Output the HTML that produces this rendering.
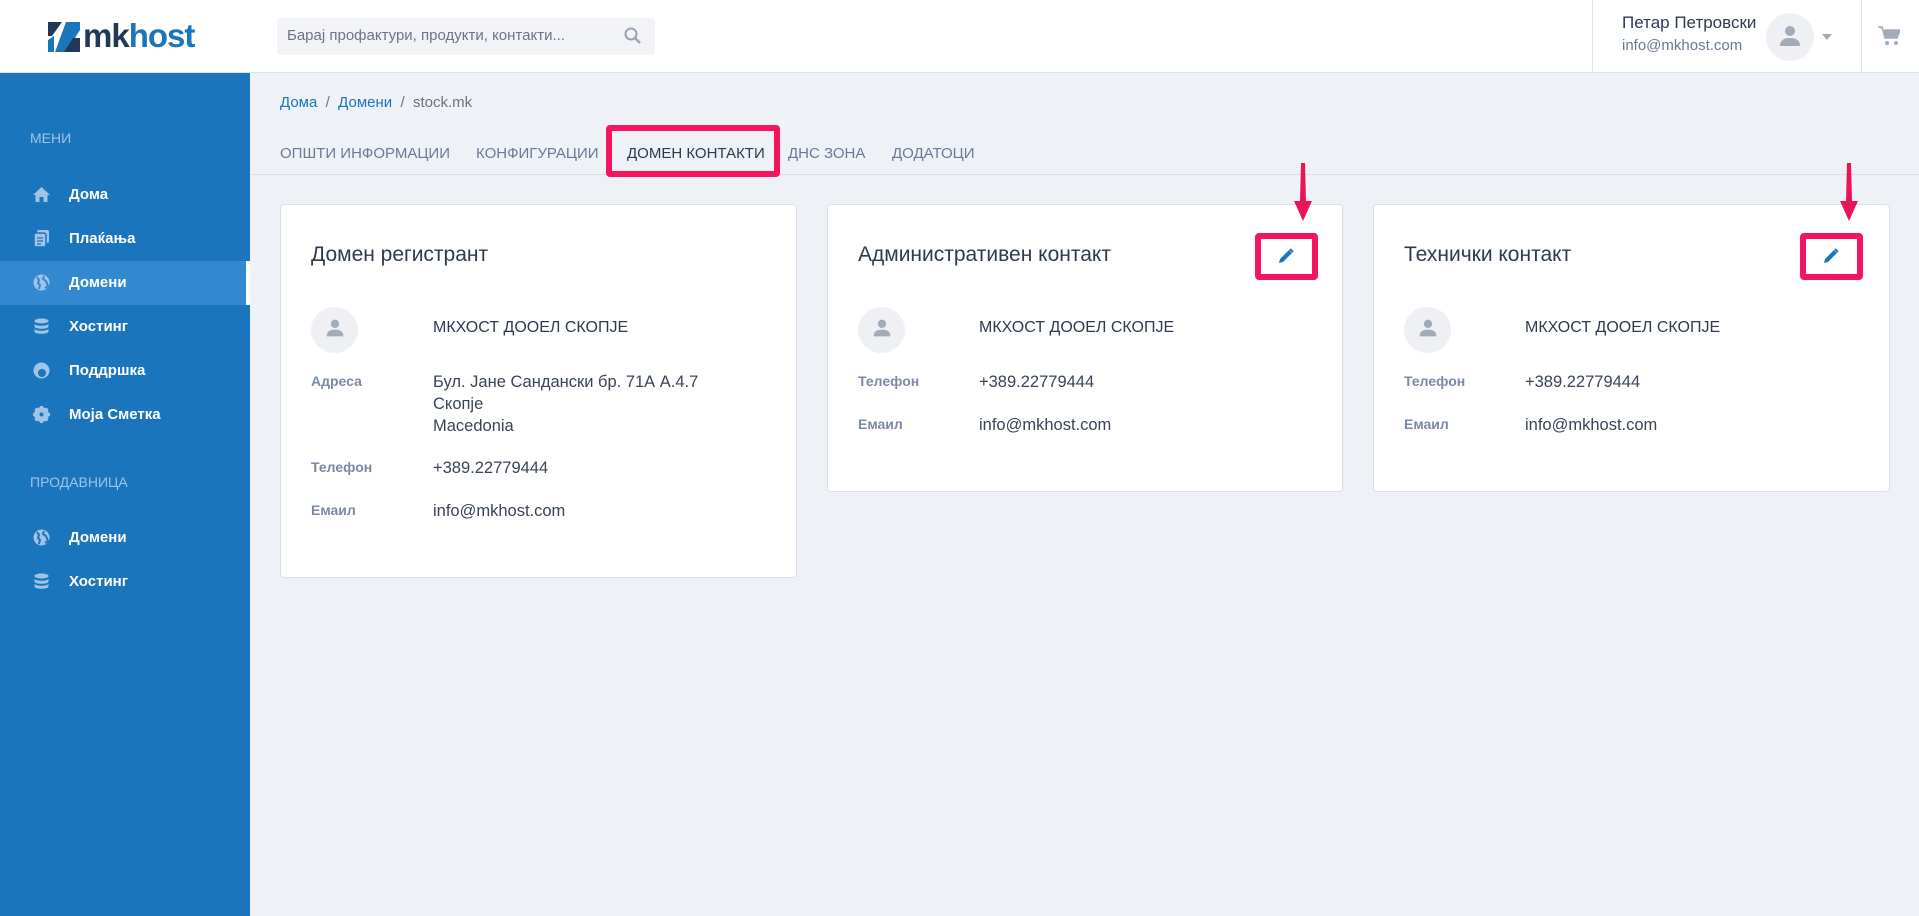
<!DOCTYPE html>
<html><head><meta charset="utf-8"><style>
*{box-sizing:border-box;margin:0;padding:0}
body{width:1919px;height:916px;overflow:hidden;background:#eef1f5;font-family:"Liberation Sans",sans-serif;position:relative;color:#2e3a4f}
.a{position:absolute;white-space:nowrap}
.hdr{left:0;top:0;width:1919px;height:73px;background:#fff;border-bottom:1px solid #dde2ea}
.side{left:0;top:73px;width:250px;height:843px;background:#1b75bc}
.mi{left:0;width:250px;height:44px;line-height:44px;color:#fff;font-weight:bold;font-size:15px;padding-left:69px}
.mi svg{position:absolute;left:33px;top:13px}
.sec{left:30px;color:#9fc4e6;font-size:14px}
.tab{top:144px;font-size:15px;color:#6b7a94;line-height:20px}
.card{background:#fff;border:1px solid #dbe0e8;border-radius:4px}
.ttl{font-size:21px;color:#2e3a4f}
.lbl{font-size:14px;font-weight:bold;color:#7c89a3}
.val{font-size:16.5px;color:#3a4457;line-height:22px}
.nm{font-size:16px;color:#2e3a4f}
.av{width:47px;height:46px;border-radius:50%;background:#eef0f4}
.red{border:6px solid #f5155f;border-radius:4px}
</style></head><body>
<div class="a hdr"></div>
<svg class="a" style="left:48px;top:22px" width="32" height="30" viewBox="0 0 32 30"><path d="M0 0h14L4 14H0z" fill="#22385b"/><path d="M18 0h14v8L18 30H7z" fill="#1b75bc"/><path d="M0 18l6-4v16H0z" fill="#1b75bc"/><path d="M25 16h7v14H16z" fill="#22385b"/></svg>
<div class="a" style="left:83px;top:17px;font-size:33px;font-weight:bold;letter-spacing:-1px"><span style="color:#22385b">mk</span><span style="color:#1b75bc">host</span></div>
<div class="a" style="left:277px;top:18px;width:378px;height:37px;background:#f2f3f6;border-radius:3px"></div>
<div class="a" style="left:287px;top:27px;font-size:15px;color:#6b7385">Барај профактури, продукти, контакти...</div>
<svg class="a" style="left:624px;top:27px" width="18" height="18" viewBox="0 0 18 18"><circle cx="7" cy="7" r="5.5" stroke="#9aa3b2" stroke-width="2" fill="none"/><path d="M11 11l5 5" stroke="#9aa3b2" stroke-width="2.4"/></svg>
<div class="a" style="left:1592px;top:0;width:1px;height:73px;background:#dde2ea"></div>
<div class="a" style="left:1861px;top:0;width:1px;height:73px;background:#dde2ea"></div>
<div class="a" style="left:1622px;top:13px;font-size:17px;color:#2e3a4f">Петар Петровски</div>
<div class="a" style="left:1622px;top:37px;font-size:15px;color:#6b7a94">info@mkhost.com</div>
<div class="a av" style="left:1766px;top:13px;width:48px;height:48px"></div>
<svg class="a" style="left:1778px;top:24px" width="24" height="24" viewBox="0 0 24 24"><circle cx="12" cy="7" r="5" fill="#a3aab8"/><path d="M2 22c0-6 4-8 10-8s10 2 10 8z" fill="#a3aab8"/></svg>
<div class="a" style="left:1822px;top:34px;border:5px solid transparent;border-top:6px solid #a3aab8"></div>
<svg class="a" style="left:1878px;top:26px" width="22" height="20" viewBox="0 0 22 20"><path d="M0 1h4l3 11h12l3-8H6" fill="#a3aab8" stroke="#a3aab8" stroke-width="1.5"/><circle cx="9" cy="17" r="2" fill="#a3aab8"/><circle cx="18" cy="17" r="2" fill="#a3aab8"/></svg>

<div class="a side"></div>
<div class="a sec" style="top:130px">МЕНИ</div>
<div class="a mi" style="top:173px"><svg width="17" height="17" viewBox="0 0 17 17"><path d="M8.5 1L0 9h2.5v7h4v-5h4v5h4V9H17z" fill="#9fc4e6"/></svg>Дома</div>
<div class="a mi" style="top:217px"><svg width="17" height="17" viewBox="0 0 17 17"><rect x="4" y="0" width="12" height="13" rx="2" fill="#9fc4e6"/><rect x="1" y="3" width="12" height="14" rx="2" fill="#9fc4e6" stroke="#1b75bc" stroke-width="1.5"/><path d="M4 8h6M4 11h6M4 14h4" stroke="#1b75bc" stroke-width="1.3"/></svg>Плаќања</div>
<div class="a mi" style="top:261px;background:#3389d0"><svg width="17" height="17" viewBox="0 0 17 17"><circle cx="8.5" cy="8.5" r="8" fill="#9fc4e6"/><path d="M4 3l2 3-1 3 2 2-1 4M11 2l-1 3 3 2 2 5-3 2" stroke="#3389d0" stroke-width="2" fill="none"/></svg>Домени</div>
<div class="a" style="left:246px;top:261px;width:4px;height:44px;background:#fff"></div>
<div class="a mi" style="top:305px"><svg width="17" height="17" viewBox="0 0 17 17"><ellipse cx="8.5" cy="3" rx="7" ry="2.5" fill="#9fc4e6"/><path d="M1.5 5.5c0 3 14 3 14 0v3c0 3-14 3-14 0zM1.5 10.5c0 3 14 3 14 0v3c0 3-14 3-14 0z" fill="#9fc4e6"/></svg>Хостинг</div>
<div class="a mi" style="top:349px"><svg width="17" height="17" viewBox="0 0 17 17"><circle cx="8.5" cy="8.5" r="8" fill="#9fc4e6"/><circle cx="9" cy="11" r="4" fill="#1b75bc"/></svg>Поддршка</div>
<div class="a mi" style="top:393px"><svg width="17" height="17" viewBox="0 0 17 17"><circle cx="8.5" cy="8.5" r="5.5" fill="none" stroke="#9fc4e6" stroke-width="4"/><path d="M8.5 0v17M0 8.5h17M2.5 2.5l12 12M14.5 2.5l-12 12" stroke="#9fc4e6" stroke-width="3"/><circle cx="8.5" cy="8.5" r="2" fill="#1b75bc"/></svg>Моја Сметка</div>
<div class="a sec" style="top:474px">ПРОДАВНИЦА</div>
<div class="a mi" style="top:516px"><svg width="17" height="17" viewBox="0 0 17 17"><circle cx="8.5" cy="8.5" r="8" fill="#9fc4e6"/><path d="M4 3l2 3-1 3 2 2-1 4M11 2l-1 3 3 2 2 5-3 2" stroke="#1b75bc" stroke-width="2" fill="none"/></svg>Домени</div>
<div class="a mi" style="top:560px"><svg width="17" height="17" viewBox="0 0 17 17"><ellipse cx="8.5" cy="3" rx="7" ry="2.5" fill="#9fc4e6"/><path d="M1.5 5.5c0 3 14 3 14 0v3c0 3-14 3-14 0zM1.5 10.5c0 3 14 3 14 0v3c0 3-14 3-14 0z" fill="#9fc4e6"/></svg>Хостинг</div>

<div class="a" style="left:280px;top:94px;font-size:15px;color:#6b7385"><span style="color:#1b75bc">Дома</span> &nbsp;/&nbsp; <span style="color:#1b75bc">Домени</span> &nbsp;/&nbsp; stock.mk</div>
<div class="a tab" style="left:280px">ОПШТИ ИНФОРМАЦИИ</div>
<div class="a tab" style="left:476px">КОНФИГУРАЦИИ</div>
<div class="a tab" style="left:627px;color:#2e3a4f">ДОМЕН КОНТАКТИ</div>
<div class="a tab" style="left:788px">ДНС ЗОНА</div>
<div class="a tab" style="left:892px">ДОДАТОЦИ</div>
<div class="a" style="left:250px;top:174px;width:1669px;height:1px;background:#dbe0e8"></div>
<div class="a red" style="left:606px;top:125px;width:174px;height:52px"></div>

<div class="a card" style="left:280px;top:204px;width:517px;height:374px"></div>
<div class="a ttl" style="left:311px;top:243px">Домен регистрант</div>
<div class="a av" style="left:311px;top:307px"></div>
<svg class="a" style="left:325px;top:318px" width="20" height="20" viewBox="0 0 24 24"><circle cx="12" cy="7" r="5" fill="#a3aab8"/><path d="M2 22c0-6 4-8 10-8s10 2 10 8z" fill="#a3aab8"/></svg>
<div class="a nm" style="left:433px;top:319px">МКХОСТ ДООЕЛ СКОПЈЕ</div>
<div class="a lbl" style="left:311px;top:373px">Адреса</div>
<div class="a val" style="left:433px;top:371px">Бул. Јане Сандански бр. 71А А.4.7<br>Скопје<br>Macedonia</div>
<div class="a lbl" style="left:311px;top:459px">Телефон</div>
<div class="a val" style="left:433px;top:457px">+389.22779444</div>
<div class="a lbl" style="left:311px;top:502px">Емаил</div>
<div class="a val" style="left:433px;top:500px">info@mkhost.com</div>

<div class="a card" style="left:827px;top:204px;width:516px;height:288px"></div>
<div class="a ttl" style="left:858px;top:243px">Административен контакт</div>
<div class="a av" style="left:858px;top:307px"></div>
<svg class="a" style="left:872px;top:318px" width="20" height="20" viewBox="0 0 24 24"><circle cx="12" cy="7" r="5" fill="#a3aab8"/><path d="M2 22c0-6 4-8 10-8s10 2 10 8z" fill="#a3aab8"/></svg>
<div class="a nm" style="left:979px;top:319px">МКХОСТ ДООЕЛ СКОПЈЕ</div>
<div class="a lbl" style="left:858px;top:373px">Телефон</div>
<div class="a val" style="left:979px;top:371px">+389.22779444</div>
<div class="a lbl" style="left:858px;top:416px">Емаил</div>
<div class="a val" style="left:979px;top:414px">info@mkhost.com</div>
<div class="a red" style="left:1255px;top:233px;width:63px;height:47px"></div>
<svg class="a" style="left:1278px;top:248px" width="16" height="16" viewBox="0 0 16 16"><path d="M1 15l1-4 9-9 3 3-9 9z" fill="#1b75bc"/><path d="M12 1l3 3" stroke="#1b75bc" stroke-width="2"/></svg>
<svg class="a" style="left:1293px;top:163px" width="20" height="60" viewBox="0 0 20 60"><path d="M8 0h4l1 38h6L10 58 1 38h6z" fill="#ea1556"/></svg>

<div class="a card" style="left:1373px;top:204px;width:517px;height:288px"></div>
<div class="a ttl" style="left:1404px;top:243px">Технички контакт</div>
<div class="a av" style="left:1404px;top:307px"></div>
<svg class="a" style="left:1418px;top:318px" width="20" height="20" viewBox="0 0 24 24"><circle cx="12" cy="7" r="5" fill="#a3aab8"/><path d="M2 22c0-6 4-8 10-8s10 2 10 8z" fill="#a3aab8"/></svg>
<div class="a nm" style="left:1525px;top:319px">МКХОСТ ДООЕЛ СКОПЈЕ</div>
<div class="a lbl" style="left:1404px;top:373px">Телефон</div>
<div class="a val" style="left:1525px;top:371px">+389.22779444</div>
<div class="a lbl" style="left:1404px;top:416px">Емаил</div>
<div class="a val" style="left:1525px;top:414px">info@mkhost.com</div>
<div class="a red" style="left:1800px;top:233px;width:63px;height:47px"></div>
<svg class="a" style="left:1823px;top:248px" width="16" height="16" viewBox="0 0 16 16"><path d="M1 15l1-4 9-9 3 3-9 9z" fill="#1b75bc"/><path d="M12 1l3 3" stroke="#1b75bc" stroke-width="2"/></svg>
<svg class="a" style="left:1839px;top:163px" width="20" height="60" viewBox="0 0 20 60"><path d="M8 0h4l1 38h6L10 58 1 38h6z" fill="#ea1556"/></svg>
</body></html>
